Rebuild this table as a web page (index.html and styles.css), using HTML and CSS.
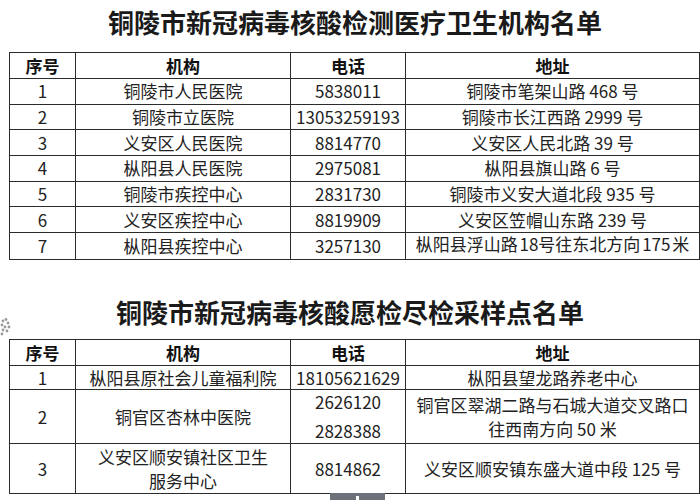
FILE: index.html
```html
<!DOCTYPE html>
<html lang="zh-CN">
<head>
<meta charset="utf-8">
<link rel="stylesheet" href="styles.css">
</head>
<body>
<div class="page">
  <h1 class="title title-first">铜陵市新冠病毒核酸检测医疗卫生机构名单</h1>
  <table class="list">
    <colgroup>
      <col class="c-no"><col class="c-org"><col class="c-tel"><col class="c-addr">
    </colgroup>
    <tr class="head"><th>序号</th><th>机构</th><th>电话</th><th>地址</th></tr>
    <tr class="r"><td>1</td><td>铜陵市人民医院</td><td>5838011</td><td>铜陵市笔架山路 468 号</td></tr>
    <tr class="r"><td>2</td><td>铜陵市立医院</td><td>13053259193</td><td>铜陵市长江西路 2999 号</td></tr>
    <tr class="r"><td>3</td><td>义安区人民医院</td><td>8814770</td><td>义安区人民北路 39 号</td></tr>
    <tr class="r"><td>4</td><td>枞阳县人民医院</td><td>2975081</td><td>枞阳县旗山路 6 号</td></tr>
    <tr class="r"><td>5</td><td>铜陵市疾控中心</td><td>2831730</td><td>铜陵市义安大道北段 935 号</td></tr>
    <tr class="r"><td>6</td><td>义安区疾控中心</td><td>8819909</td><td>义安区笠帽山东路 239 号</td></tr>
    <tr class="r"><td>7</td><td>枞阳县疾控中心</td><td>3257130</td><td>枞阳县浮山路<span class="thin"> </span>18号往东北方向<span class="thin"> </span>175<span class="thin"> </span>米</td></tr>
  </table>

  <h1 class="title title-second">铜陵市新冠病毒核酸愿检尽检采样点名单</h1>
  <table class="list">
    <colgroup>
      <col class="c-no"><col class="c-org"><col class="c-tel"><col class="c-addr">
    </colgroup>
    <tr class="head"><th>序号</th><th>机构</th><th>电话</th><th>地址</th></tr>
    <tr class="r2a"><td>1</td><td>枞阳县原社会儿童福利院</td><td>18105621629</td><td>枞阳县望龙路养老中心</td></tr>
    <tr class="r2b"><td>2</td><td>铜官区杏林中医院</td><td><div class="tel-line">2626120</div><div class="tel-line tel-second">2828388</div></td><td><div class="ml">铜官区翠湖二路与石城大道交叉路口</div><div class="ml">往西南方向 50 米</div></td></tr>
    <tr class="r2c"><td>3</td><td><div class="ml">义安区顺安镇社区卫生</div><div class="ml">服务中心</div></td><td>8814862</td><td>义安区顺安镇东盛大道中段 125 号</td></tr>
  </table>
</div>

<svg class="handle" width="12" height="18" viewBox="0 0 12 18">
  <circle cx="3" cy="3" r="1.4" fill="#9a9a9a"/>
  <circle cx="6" cy="1.5" r="1.4" fill="#9a9a9a"/>
  <circle cx="8" cy="5" r="1.4" fill="#9a9a9a"/>
  <circle cx="2" cy="7" r="1.4" fill="#9a9a9a"/>
  <circle cx="5" cy="9" r="1.4" fill="#9a9a9a"/>
  <circle cx="9" cy="9" r="1.4" fill="#9a9a9a"/>
  <circle cx="3" cy="12" r="1.4" fill="#9a9a9a"/>
  <circle cx="7" cy="13" r="1.4" fill="#9a9a9a"/>
  <circle cx="2" cy="16" r="1.4" fill="#9a9a9a"/>
</svg>
<div class="bottom-tab"><span class="tab-mark"></span></div>
</body>
</html>
```

FILE: styles.css
```css
html, body {
  margin: 0;
  padding: 0;
  background: #ffffff;
}

body {
  width: 700px;
  height: 500px;
  overflow: hidden;
  position: relative;
  font-family: "Noto Sans CJK SC", "Noto Sans", sans-serif;
  color: #222222;
}

.page {
  display: flex;
  flex-direction: column;
  align-items: flex-start;
}

.title {
  margin: 0;
  width: 700px;
  text-align: center;
  font-size: 26px;
  font-weight: 700;
  color: #1a1a1a;
  line-height: 44px;
  letter-spacing: 0;
}

.title-first {
  height: 52px;
  padding-left: 10px;
  box-sizing: border-box;
}

.title-second {
  margin-top: 30px;
  height: 49px;
}

.list {
  margin-left: 9px;
  border-collapse: collapse;
  table-layout: fixed;
  width: 690px;
}

.c-no { width: 66px; }
.c-org { width: 215px; }
.c-tel { width: 115px; }
.c-addr { width: 294px; }

.list th,
.list td {
  border: 1px solid #2b2b2b;
  padding: 0;
  text-align: center;
  vertical-align: middle;
  font-size: 17px;
  line-height: 22px;
  white-space: nowrap;
}

.list th {
  font-weight: 700;
  color: #111111;
}

.list td {
  font-weight: 400;
}

.thin {
  font-size: 8px;
}

.head { height: 26px; }
.r { height: 25.7px; }

.r2a { height: 24px; }
.r2b { height: 54px; }
.r2c { height: 50px; }

.tel-line {
  line-height: 24px;
}

.tel-second {
  margin-top: 5px;
}

.ml {
  line-height: 24px;
}

.handle {
  position: absolute;
  left: 0;
  top: 318px;
}

.bottom-tab {
  position: absolute;
  left: 330px;
  top: 493px;
  width: 55px;
  height: 7px;
  background: #6d727a;
  display: flex;
  justify-content: center;
}

.tab-mark {
  display: block;
  width: 3px;
  height: 4px;
  margin-top: 3px;
  background: #ffffff;
}
```
